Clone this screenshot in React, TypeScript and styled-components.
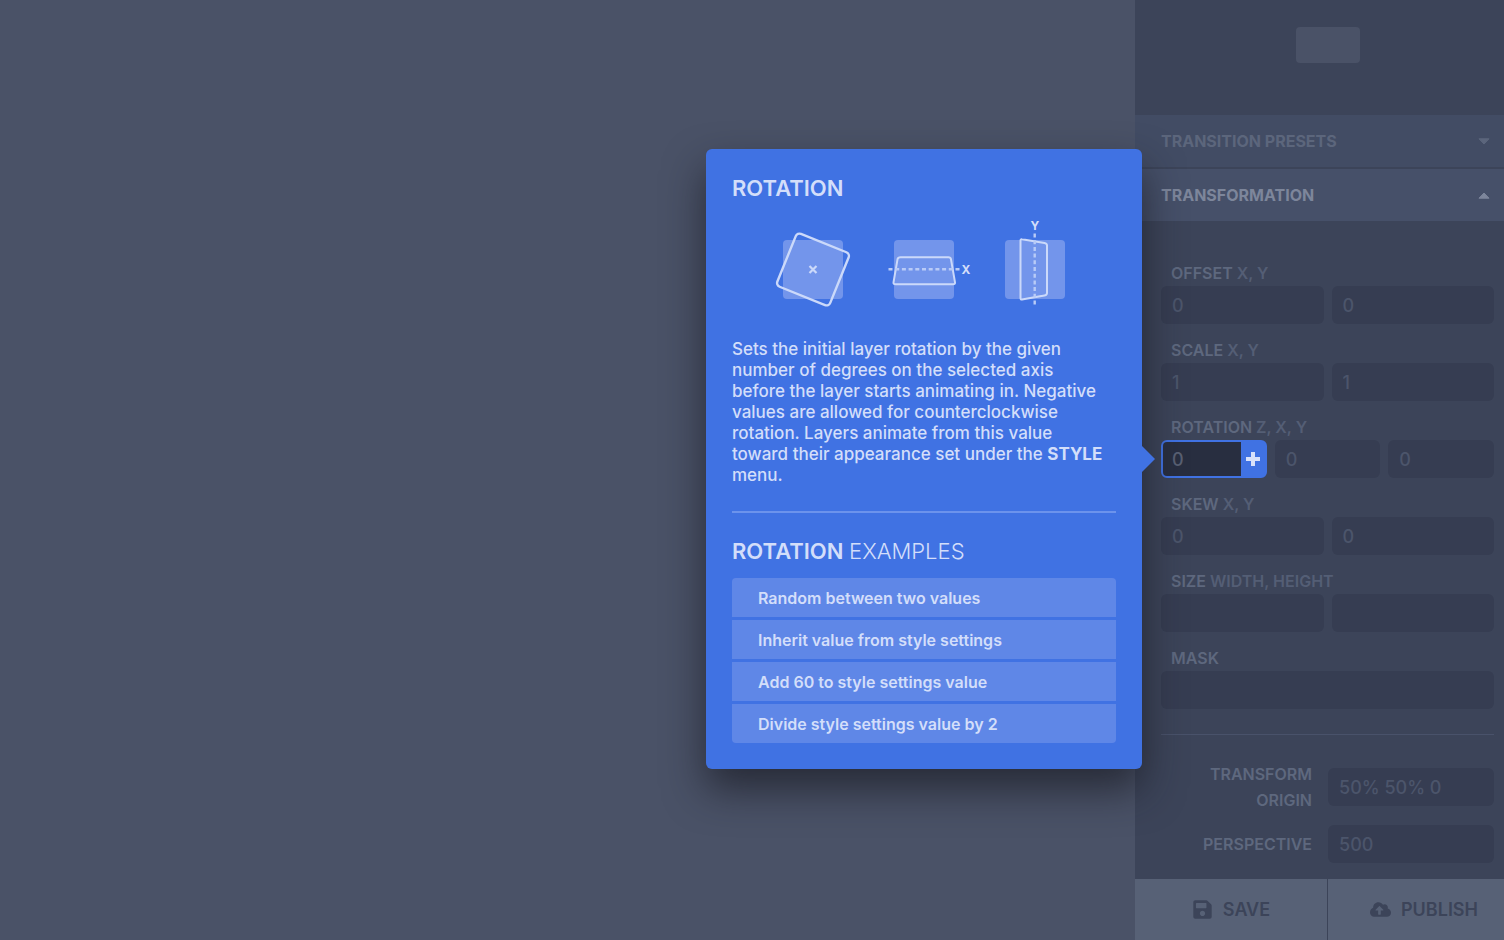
import React from "react";
import styled, { createGlobalStyle } from "styled-components";
import { FaSave, FaCloudUploadAlt } from "react-icons/fa";

const Global = createGlobalStyle`
  *, *::before, *::after { box-sizing: border-box; }
  body { margin: 0; background: #4a5267; }
  body, button, input { font-family: Inter, "Liberation Sans", sans-serif; }
`;

const Page = styled.div`
  display: flex;
  min-height: 100vh;
  overflow: hidden;
`;

const Canvas = styled.main`
  flex: 1;
  background: #4a5267;
`;

const Sidebar = styled.aside`
  flex: none;
  display: flex;
  flex-direction: column;
  width: 385px;
  margin-right: -16px;
  background: #3c4459;
`;

const Preview = styled.div`
  display: flex;
  justify-content: center;
  align-items: flex-start;
  height: 115px;
  padding-top: 27px;
`;

const Layer = styled.div`
  width: 64px;
  height: 36px;
  border-radius: 4px;
  background: #4a5267;
`;

const SectionHeaders = styled.div`
  display: flex;
  flex-direction: column;
  gap: 2px;
`;

const SectionHeader = styled.button<{ $open?: boolean }>`
  display: flex;
  align-items: center;
  justify-content: space-between;
  height: 52px;
  padding: 0 30px 0 26px;
  border: 0;
  background: ${(p) => (p.$open ? "#465069" : "#424c64")};
  color: ${(p) => (p.$open ? "#7d869b" : "#5c667c")};
  font-size: 16px;
  font-weight: 700;
  line-height: 26px;
`;

const Fields = styled.div`
  display: flex;
  flex-direction: column;
  gap: 13px;
  margin: 0 26px;
  padding: 39px 0 25px;
  border-bottom: 1px solid #49526a;
`;

const Field = styled.fieldset`
  min-width: 0;
  margin: 0;
  padding: 0;
  border: 0;
`;

const FieldName = styled.legend`
  padding: 0 10px;
  color: #5e687e;
  font-size: 16px;
  font-weight: 600;
  line-height: 26px;
`;

const Axes = styled.span`
  color: #545e75;
`;

const Inputs = styled.div`
  display: grid;
  grid-auto-flow: column;
  grid-auto-columns: minmax(0, 1fr);
  gap: 8px;
`;

const Input = styled.input`
  width: 100%;
  min-width: 0;
  height: 38px;
  padding: 0 11px;
  border: 0;
  border-radius: 6px;
  outline: 0;
  background: #363d52;
  color: #4c556b;
  font-size: 18px;
  font-weight: 500;
`;

const ActiveInput = styled.div`
  position: relative;
  display: flex;
  height: 38px;
  border: 2px solid #4072e3;
  border-radius: 6px;
  background: #4072e3;
`;

const ActiveValue = styled(Input)`
  flex: 1;
  height: 34px;
  padding: 0 9px;
  border-radius: 4px 0 0 4px;
  background: #282e40;
  color: #596073;
`;

const AddButton = styled.button`
  flex: none;
  display: flex;
  align-items: center;
  justify-content: center;
  width: 24px;
  padding: 0;
  border: 0;
  background: transparent;
  color: #d9e2fa;
`;

const Popover = styled.div`
  position: absolute;
  top: -293px;
  right: calc(100% + 21px);
  width: 436px;
  padding: 26px;
  border-radius: 6px;
  background: #4072e3;
  box-shadow: 0 20px 40px rgba(24, 26, 34, 0.7);
  color: #d3defa;

  &::after {
    content: "";
    position: absolute;
    top: 297px;
    left: 100%;
    border: 13px solid transparent;
    border-left-color: #4072e3;
    border-right-width: 0;
  }
`;

const Title = styled.h2`
  margin: 0;
  font-size: 22px;
  font-weight: 600;
  line-height: 26px;
`;

const Light = styled.span`
  font-weight: 300;
`;

const Drawing = styled.svg`
  display: block;
  margin: 14px auto 29px;
`;

const Text = styled.p`
  margin: 0;
  padding-right: 8px;
  font-size: 17px;
  font-weight: 500;
  line-height: 21px;
`;

const Divider = styled.hr`
  height: 2px;
  margin: 25px 0;
  border: 0;
  background: #6c93ec;
`;

const Examples = styled.ul`
  display: flex;
  flex-direction: column;
  gap: 3px;
  margin: 14px 0 0;
  padding: 0;
  overflow: hidden;
  border-radius: 4px;
  list-style: none;
`;

const Example = styled.button`
  display: block;
  width: 100%;
  height: 39px;
  padding: 0 26px;
  border: 0;
  background: #5f87e7;
  color: #d3defa;
  font-size: 16px;
  font-weight: 600;
  text-align: left;
`;

const Settings = styled.div`
  flex: 1;
  display: flex;
  flex-direction: column;
  gap: 12px;
  padding: 26px 26px 16px;
`;

const Setting = styled.label`
  display: grid;
  grid-template-columns: 1fr 166px;
  align-items: center;
  gap: 16px;
  color: #5e687e;
  font-size: 16px;
  font-weight: 600;
  line-height: 26px;
  text-align: right;
`;

const SettingName = styled.span`
  padding-left: 32px;
`;

const Actions = styled.div`
  display: flex;
  gap: 1px;
  height: 61px;
`;

const Action = styled.button`
  flex: 1;
  display: flex;
  align-items: center;
  justify-content: center;
  gap: 10px;
  border: 0;
  background: #576176;
  color: #3c4459;
  font-size: 18px;
  font-weight: 600;
`;

const Caret = ({ up }: { up?: boolean }) => (
  <svg width="12" height="7" viewBox="0 0 12 7" aria-hidden="true">
    <path
      d={up ? "M1 6.2 6 1l5 5.2Z" : "M1 .8h10L6 6Z"}
      fill="currentColor"
      stroke="currentColor"
      strokeLinejoin="round"
    />
  </svg>
);

const RotationDrawing = () => (
  <Drawing width="308" height="95" viewBox="0 0 308 95" role="img" aria-label="Rotation around the Z, X and Y axes">
    <g fill="#7395eb">
      <rect x="13" y="25" width="60" height="59" rx="4" />
      <rect x="124" y="25" width="60" height="59" rx="4" />
      <rect x="235" y="25" width="60" height="59" rx="4" />
    </g>
    <g fill="none" stroke="#cbd9fa" strokeLinejoin="round">
      <rect x="14.5" y="26" width="57" height="57" rx="4" strokeWidth="2.4" transform="rotate(22 43 54.5)" />
      <path d="m39.5 51 7 7m0-7-7 7" strokeWidth="2.2" />
      <path d="M130.5 42.3h48q2 0 2.5 2l4 23q.3 2-2 2h-57.5q-2.3 0-2-2l4-23q.5-2 3-2Z" strokeWidth="2" />
      <path d="M252 24.3 274.5 28q2.5.4 2.5 2.5V78q0 2-2.5 2.4L252 84.5q-1.5.2-1.5-1.5V25.5q0-1.5 1.5-1.2Z" strokeWidth="2" />
    </g>
    <g fill="none" stroke="#b9cbf7" strokeWidth="2.4" strokeDasharray="4 2.7">
      <path d="M118.5 54.3H190" />
      <path d="M264.7 18.5V90" />
    </g>
    <g fill="#d3defa" fontFamily="Inter, sans-serif" fontSize="12" fontWeight="700" textAnchor="middle">
      <text x="196" y="59">X</text>
      <text x="265" y="15">Y</text>
    </g>
  </Drawing>
);

const examples = [
  "Random between two values",
  "Inherit value from style settings",
  "Add 60 to style settings value",
  "Divide style settings value by 2",
];

const RotationHelp = () => (
  <Popover role="dialog" aria-label="Rotation help">
    <Title>ROTATION</Title>
    <RotationDrawing />
    <Text>
      Sets the initial layer rotation by the given number of degrees on the selected axis before the layer starts
      animating in. Negative values are allowed for counterclockwise rotation. Layers animate from this value toward
      their appearance set under the <b>STYLE</b> menu.
    </Text>
    <Divider />
    <Title>
      ROTATION <Light>EXAMPLES</Light>
    </Title>
    <Examples>
      {examples.map((e) => (
        <li key={e}>
          <Example type="button">{e}</Example>
        </li>
      ))}
    </Examples>
  </Popover>
);

type PropertyProps = { name: string; axes?: string; values: string[]; active?: boolean };

const Property = ({ name, axes, values, active }: PropertyProps) => (
  <Field>
    <FieldName>
      {name} {axes && <Axes>{axes}</Axes>}
    </FieldName>
    <Inputs>
      {values.map((v, i) =>
        active && i === 0 ? (
          <ActiveInput key={i}>
            <ActiveValue type="text" aria-label={`${name} 1`} defaultValue={v} />
            <AddButton type="button" aria-label="Add value">
              <svg width="14" height="14" viewBox="0 0 14 14" aria-hidden="true">
                <path d="M7 0v14M0 7h14" stroke="currentColor" strokeWidth="4" />
              </svg>
            </AddButton>
            <RotationHelp />
          </ActiveInput>
        ) : (
          <Input key={i} type="text" aria-label={`${name} ${i + 1}`} defaultValue={v} />
        )
      )}
    </Inputs>
  </Field>
);

export default function App() {
  return (
    <Page>
      <Global />
      <Canvas />
      <Sidebar>
        <Preview>
          <Layer />
        </Preview>
        <SectionHeaders>
          <SectionHeader type="button" aria-expanded="false">
            TRANSITION PRESETS <Caret />
          </SectionHeader>
          <SectionHeader type="button" aria-expanded="true" $open>
            TRANSFORMATION <Caret up />
          </SectionHeader>
        </SectionHeaders>
        <Fields>
          <Property name="OFFSET" axes="X, Y" values={["0", "0"]} />
          <Property name="SCALE" axes="X, Y" values={["1", "1"]} />
          <Property name="ROTATION" axes="Z, X, Y" values={["0", "0", "0"]} active />
          <Property name="SKEW" axes="X, Y" values={["0", "0"]} />
          <Property name="SIZE" axes="WIDTH, HEIGHT" values={["", ""]} />
          <Property name="MASK" values={[""]} />
        </Fields>
        <Settings>
          <Setting>
            <SettingName>TRANSFORM ORIGIN</SettingName>
            <Input type="text" defaultValue="50% 50% 0" />
          </Setting>
          <Setting>
            <SettingName>PERSPECTIVE</SettingName>
            <Input type="text" defaultValue="500" />
          </Setting>
        </Settings>
        <Actions>
          <Action type="button">
            <FaSave size={21} /> SAVE
          </Action>
          <Action type="button">
            <FaCloudUploadAlt size={21} /> PUBLISH
          </Action>
        </Actions>
      </Sidebar>
    </Page>
  );
}
